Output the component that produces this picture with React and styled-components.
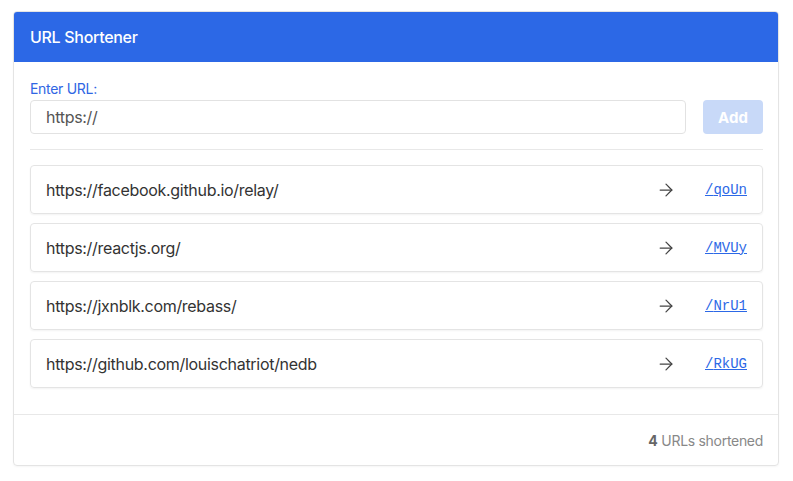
import React, { useState } from 'react';
import styled, { createGlobalStyle } from 'styled-components';
import { ArrowRight } from 'lucide-react';

const GlobalStyle = createGlobalStyle`
  body {
    margin: 0;
    background: #fff;
    font-family: Inter, "Liberation Sans", sans-serif;
    letter-spacing: -0.3px;
    color: #333;
  }
`;

const Page = styled.div`
  padding: 11px 14px 16px 13px;
`;

const Card = styled.div`
  border: 1px solid #e4e4e4;
  border-radius: 4px;
  overflow: hidden;
  box-shadow: 0 1px 2px rgba(0, 0, 0, 0.04);
`;

const Header = styled.div`
  height: 50px;
  display: flex;
  align-items: center;
  padding: 0 16px;
  background: #2c68e6;
  color: #fff;
  font-size: 16px;
  font-weight: 500;
`;

const Body = styled.div`
  padding: 18px 15px 26px 16px;
`;

const Label = styled.label`
  display: block;
  color: #2f66e4;
  font-size: 14px;
  line-height: 17px;
  margin-bottom: 3px;
`;

const InputRow = styled.div`
  display: flex;
  gap: 17px;
`;

const Input = styled.input`
  flex: 1;
  height: 34px;
  box-sizing: border-box;
  border: 1px solid #e2e2e2;
  border-radius: 4px;
  padding: 0 15px;
  font-family: inherit;
  letter-spacing: inherit;
  font-size: 16px;
  color: #555;
  outline: none;
`;

const AddButton = styled.button`
  width: 60px;
  height: 34px;
  border: none;
  border-radius: 4px;
  background: #c8d9f8;
  color: #fff;
  font-family: inherit;
  font-size: 15px;
  font-weight: 700;
`;

const Divider = styled.hr`
  border: none;
  border-top: 1px solid #e8e8e8;
  margin: 15px 0;
`;

const List = styled.div`
  display: flex;
  flex-direction: column;
  gap: 9px;
`;

const Row = styled.div`
  height: 49px;
  box-sizing: border-box;
  display: flex;
  align-items: center;
  padding: 0 15px;
  border: 1px solid #e4e4e4;
  border-radius: 4px;
  box-shadow: 0 1px 2px rgba(0, 0, 0, 0.05);
  font-size: 16px;
  color: #333;
`;

const LongUrl = styled.span`
  flex: 1;
`;

const Arrow = styled(ArrowRight)`
  margin-right: 29px;
  color: #444;
`;

const ShortLink = styled.a`
  font-family: "Liberation Mono", monospace;
  letter-spacing: 0;
  font-size: 14px;
  color: #2c68e6;
  text-decoration: underline;
`;

const Footer = styled.div`
  height: 50px;
  border-top: 1px solid #e8e8e8;
  display: flex;
  align-items: center;
  justify-content: flex-end;
  padding: 0 15px;
  font-size: 14px;
  color: #888;

  b {
    color: #666;
    margin-right: 4px;
  }
`;

const initialUrls = [
  { url: 'https://facebook.github.io/relay/', code: 'qoUn' },
  { url: 'https://reactjs.org/', code: 'MVUy' },
  { url: 'https://jxnblk.com/rebass/', code: 'NrU1' },
  { url: 'https://github.com/louischatriot/nedb', code: 'RkUG' },
];

export default function App() {
  const [value, setValue] = useState('https://');
  const [urls] = useState(initialUrls);

  return (
    <>
      <GlobalStyle />
      <Page>
        <Card>
          <Header>URL Shortener</Header>
          <Body>
            <Label htmlFor="url">Enter URL:</Label>
            <InputRow>
              <Input id="url" value={value} onChange={(e) => setValue(e.target.value)} />
              <AddButton disabled>Add</AddButton>
            </InputRow>
            <Divider />
            <List>
              {urls.map((u) => (
                <Row key={u.code}>
                  <LongUrl>{u.url}</LongUrl>
                  <Arrow size={20} strokeWidth={1.5} />
                  <ShortLink href={`#/${u.code}`}>/{u.code}</ShortLink>
                </Row>
              ))}
            </List>
          </Body>
          <Footer>
            <b>{urls.length}</b> URLs shortened
          </Footer>
        </Card>
      </Page>
    </>
  );
}
